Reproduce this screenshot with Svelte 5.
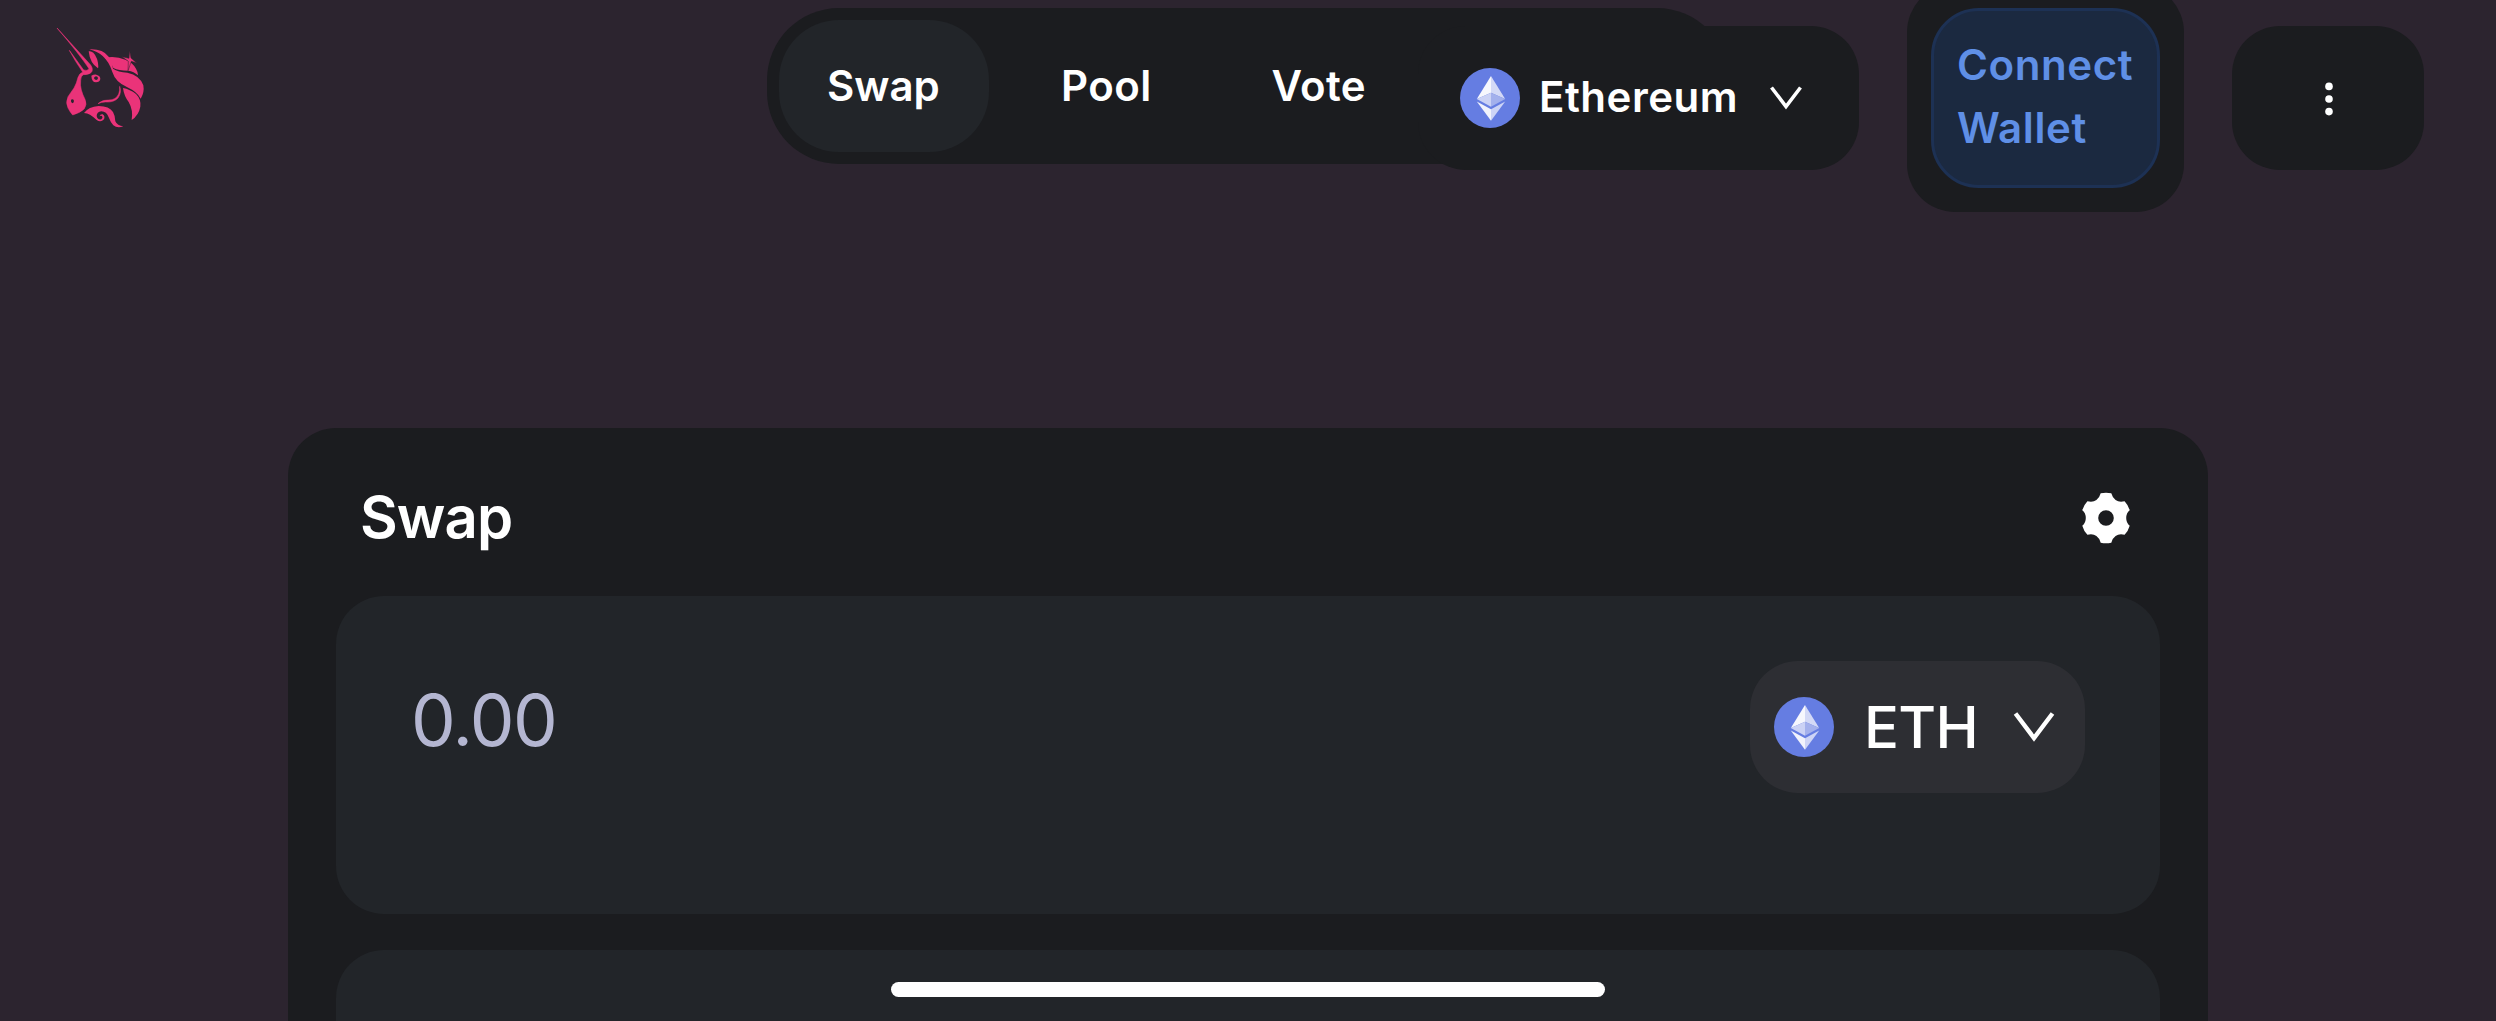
<script>
  const links = ['Swap', 'Pool', 'Vote'];
</script>

{#snippet eth()}
  <svg class="eth" viewBox="0 0 60 60" aria-hidden="true">
    <circle cx="30" cy="30" r="30" fill="#657de2" />
    <path d="M31 8 16.8 31 31 24.8Z" fill="#f6f7fd" />
    <path d="M31 8 45.2 31 31 24.8Z" fill="#d3d9f6" />
    <path d="M16.8 31 31 24.8V38.8Z" fill="#cbd2f5" />
    <path d="M45.2 31 31 24.8V38.8Z" fill="#a3b0ec" />
    <path d="M16.8 33.6 31 41.2V52.8Z" fill="#f1f3fc" />
    <path d="M45.2 33.6 31 41.2V52.8Z" fill="#cdd4f6" />
  </svg>
{/snippet}

<div class="page">
  <header>
    <svg class="logo" viewBox="0 0 390 390" fill="#ea3379" aria-label="Unicorn">
      <path stroke="#ea3379" stroke-width="1.6" stroke-linejoin="round" d="M51 54 152 165Q162 180 153 188 146 194 130 194 122 198 122 212 120 226 124 240 128 254 135 268 142 284 133 296 122 308 98 315 90 306 84 294 76 278 84 260 92 248 102 234 110 220 114 202 118 190 128 186 106 155 88 121L131 180Q142 184 147 176 118 132 51 54Z" />
      <path d="M146 124Q153 122 160 128 174 142 175 171L174 175Q150 160 146 124Z" />
      <path d="M148 118Q188 116 206 140 216 154 219 176 234 186 262 188 300 196 310 226 314 248 302 266 292 246 262 232 226 216 217 186 208 156 188 138 172 124 148 118Z" />
      <path d="M194 144Q224 136 258 150 278 158 288 176 294 186 294 196 282 184 264 182 236 182 220 174 212 154 194 144Z" />
      <path d="M249 234Q270 238 288 252 304 268 301 290 296 316 275 330 280 300 266 276 252 258 249 234Z" />
      <path stroke="#ea3379" stroke-width="1.5" d="M239 229Q246 248 234 264 222 278 196 276 184 276 174 281 188 268 206 270 228 270 236 252 240 242 239 229Z" />
      <path d="M132 309Q146 290 176 288 208 288 219 306 226 318 226 334 232 348 250 349 232 356 220 346 212 338 206 322 200 304 184 304 170 306 170 318 172 330 184 328 190 324 186 318 180 316 178 320 180 312 188 313 196 318 192 328 182 338 170 330 160 320 150 314 142 310 132 309Z" />
      <path d="M269 122 273 144 290 159 274 154 264 182 265 154 246 140 267 145Z" stroke="#2c242f" stroke-width="1.5" />
      <path
        fill-rule="evenodd"
        d="M154 197Q162 193 169 194 181 197 181 207 179 217 168 217 155 216 154 197ZM168 199Q162 200 162 205 164 210 169 210 174 209 174 204 173 199 168 199Z"
      />
      <path d="M93 269Q99 265 102 272 102 279 97 280 92 278 93 269Z" fill="#2c242f" />
    </svg>

    <nav>
      {#each links as link, i}
        <a class:active={i === 0}>{link}</a>
      {/each}
    </nav>

    <div class="actions">
      <div class="network">
        {@render eth()}
        <span>Ethereum</span>
        <svg class="chev" viewBox="0 0 34 24" aria-hidden="true">
          <path d="M2.5 1.5 17 20.5 31.5 1.5" />
        </svg>
      </div>
      <div class="wallet"><button>Connect<br />Wallet</button></div>
      <div class="more">
        <svg viewBox="0 0 10 36" aria-hidden="true">
          <circle cx="5" cy="5.4" r="3.8" /><circle cx="5" cy="18" r="3.8" /><circle cx="5" cy="30.6" r="3.8" />
        </svg>
      </div>
    </div>
  </header>

  <main>
    <div class="title">
      <h1>Swap</h1>
      <svg class="gear" viewBox="-25 -26 50 52" aria-hidden="true">
        <path
          fill-rule="evenodd"
          d="M-5.3-24.8Q0-25.8 5.3-24.8 6.6-20 9.6-18 13-15.5 18.6-16.8 22.4-12.8 23.7-7.8 20.2-5 20.2 0 20.2 5 23.7 7.8 22.4 12.8 18.6 16.8 13 15.5 9.6 18 6.6 20 5.3 24.8 0 25.8-5.3 24.8-6.6 20-9.6 18-13 15.5-18.6 16.8-22.4 12.8-23.7 7.8-20.2 5-20.2 0-20.2-5-23.7-7.8-22.4-12.8-18.6-16.8-13-15.5-9.6-18-6.6-20-5.3-24.8ZM0-7.8A7.8 7.8 0 1 0 0 7.8 7.8 7.8 0 1 0 0-7.8Z"
        />
      </svg>
    </div>
    <section class="panel">
      <span class="amount">0.00</span>
      <div class="token">
        {@render eth()}
        <span>ETH</span>
        <svg class="chev" viewBox="0 0 42 30" aria-hidden="true">
          <path d="M2.5 1.5 21 26 39.5 1.5" />
        </svg>
      </div>
    </section>
    <section class="panel"></section>
  </main>
  <div class="home"></div>
</div>

<style>
  :global(body) {
    overflow: hidden;
    background: #2c242f;
  }
  .page {
    position: relative;
    height: 1021px;
    overflow: hidden;
    background: #2c242f;
    color: #fff;
    font-family: Inter, 'Liberation Sans', sans-serif;
  }
  svg {
    display: block;
    flex: none;
  }
  header {
    display: grid;
    height: 196px;
    padding: 0 72px 0 40px;
    box-sizing: border-box;
    font-size: 42px;
    font-weight: 600;
    line-height: 63px;
  }
  header > * {
    grid-area: 1 / 1;
  }
  .logo {
    width: 130px;
    height: 130px;
    margin-top: 10px;
  }
  nav {
    display: flex;
    justify-self: start;
    gap: 24px;
    width: 962px;
    height: 156px;
    margin: 8px 0 0 727px;
    padding: 12px;
    box-sizing: border-box;
    border-radius: 72px;
    background: #1b1c1f;
  }
  nav a {
    height: 132px;
    padding: 34px 48px 0;
    box-sizing: border-box;
    border-radius: 60px;
    letter-spacing: 0.4px;
  }
  nav a.active {
    width: 210px;
    background: #222529;
    letter-spacing: 0;
  }
  .actions {
    display: flex;
    justify-self: end;
    align-items: center;
    gap: 48px;
    height: 196px;
  }
  .network {
    display: flex;
    align-items: center;
    width: 441px;
    height: 144px;
    padding-left: 42px;
    box-sizing: border-box;
    border-radius: 48px;
    background: #1b1c1f;
  }
  .network span {
    width: 212px;
    margin: 0 18px 4px 19px;
    letter-spacing: 0.5px;
  }
  .network .chev {
    width: 34px;
    height: 24px;
  }
  .chev path {
    fill: none;
    stroke: #fff;
    stroke-width: 3.6;
  }
  .eth {
    width: 60px;
    height: 60px;
  }
  .wallet {
    width: 277px;
    height: 228px;
    padding: 24px;
    box-sizing: border-box;
    border-radius: 48px;
    background: #1b1c1f;
  }
  button {
    display: block;
    width: 229px;
    height: 180px;
    padding: 22px 0 26px 23px;
    box-sizing: border-box;
    border: 3px solid #1d3154;
    border-radius: 48px;
    background: #1b2940;
    color: #5f8fe6;
    font: inherit;
    letter-spacing: 0.6px;
    text-align: left;
  }
  .more {
    display: grid;
    place-items: center;
    width: 192px;
    height: 144px;
    padding: 1px 0 0 1px;
    box-sizing: border-box;
    border-radius: 48px;
    background: #1b1c1f;
  }
  .more svg {
    width: 10px;
    height: 36px;
    fill: #fff;
  }
  main {
    width: 1920px;
    height: 700px;
    margin: 232px auto 0;
    padding: 0 48px;
    box-sizing: border-box;
    border-radius: 48px;
    background: #1b1c1f;
  }
  .title {
    display: flex;
    align-items: center;
    justify-content: space-between;
    height: 168px;
    padding: 12px 29px 0 24px;
    box-sizing: border-box;
  }
  h1 {
    margin: 0 0 2px;
    font-size: 58px;
    font-weight: 600;
    letter-spacing: -0.9px;
    line-height: 72px;
  }
  .gear {
    width: 50px;
    height: 52px;
    fill: #fff;
  }
  .panel {
    display: flex;
    justify-content: space-between;
    height: 318px;
    margin-bottom: 36px;
    padding: 65px 75px 0;
    box-sizing: border-box;
    border-radius: 48px;
    background: #222529;
  }
  .amount {
    margin-top: 15px;
    color: #b4b6d1;
    font-size: 71px;
    letter-spacing: -1.5px;
    line-height: 88px;
  }
  .token {
    display: flex;
    align-items: center;
    width: 335px;
    height: 132px;
    padding-left: 24px;
    box-sizing: border-box;
    border-radius: 48px;
    background: #2d2e33;
    font-size: 58px;
    font-weight: 500;
    letter-spacing: -0.7px;
  }
  .token span {
    width: 116px;
    margin: 0 33px 0 30px;
  }
  .token .chev {
    width: 42px;
    height: 30px;
  }
  .token .chev path {
    stroke-width: 4.4;
  }
  .home {
    position: absolute;
    bottom: 24px;
    left: 50%;
    width: 714px;
    height: 15px;
    margin-left: -357px;
    border-radius: 8px;
    background: #fff;
  }
</style>
